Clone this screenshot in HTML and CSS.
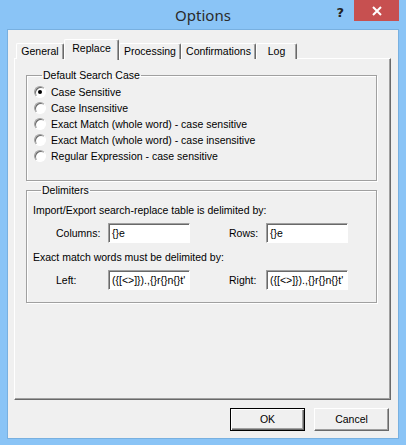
FILE: index.html
```html
<!DOCTYPE html>
<html lang="en">
<head>
    <meta charset="UTF-8">
    <title>Options</title>
    <link rel="stylesheet" href="styles.css">
</head>

<body>
    <div class="window">
        <div class="titlebar">
            <span></span>
            <span class="title">Options</span>
            <div class="caption-buttons">
                <span class="help">?</span>
                <span class="close">
                    <svg width="10" height="10" viewBox="0 0 10 10">
                        <path d="M1 1 L9 9 M9 1 L1 9" stroke="#fff" stroke-width="2"/>
                    </svg>
                </span>
            </div>
        </div>

        <div class="client">
            <div class="tabs">
                <div class="tab tab-general">General</div>
                <div class="tab tab-replace active">Replace</div>
                <div class="tab tab-processing">Processing</div>
                <div class="tab tab-confirm">Confirmations</div>
                <div class="tab tab-log">Log</div>
            </div>

            <div class="panel">
                <fieldset class="group group-case">
                    <legend>Default Search Case</legend>
                    <label class="radio"><span class="dot checked"></span>Case Sensitive</label>
                    <label class="radio"><span class="dot"></span>Case Insensitive</label>
                    <label class="radio"><span class="dot"></span>Exact Match (whole word) - case sensitive</label>
                    <label class="radio"><span class="dot"></span>Exact Match (whole word) - case insensitive</label>
                    <label class="radio"><span class="dot"></span>Regular Expression - case sensitive</label>
                </fieldset>

                <fieldset class="group group-delim">
                    <legend>Delimiters</legend>
                    <p class="note">Import/Export search-replace table is delimited by:</p>
                    <div class="field-row">
                        <span class="lbl">Columns:</span>
                        <span class="edit">{}e</span>
                        <span class="lbl lbl-2">Rows:</span>
                        <span class="edit">{}e</span>
                    </div>
                    <p class="note note-2">Exact match words must be delimited by:</p>
                    <div class="field-row">
                        <span class="lbl">Left:</span>
                        <span class="edit">({[&lt;&gt;]}).,{}r{}n{}t'</span>
                        <span class="lbl lbl-2">Right:</span>
                        <span class="edit">({[&lt;&gt;]}).,{}r{}n{}t'</span>
                    </div>
                </fieldset>
            </div>

            <div class="buttons">
                <div class="btn btn-default">OK</div>
                <div class="btn">Cancel</div>
            </div>
        </div>
    </div>
</body>
</html>
```

FILE: styles.css
```css
body {
    margin: 0;
    font-family: "Liberation Sans", Arial, sans-serif;
    font-size: 10.5px;
    color: #000;
}

.window {
    width: 406px;
    height: 445px;
    background-color: #8ac4f6;
    display: flex;
    flex-direction: column;
    box-sizing: border-box;
}

/* title bar */
.titlebar {
    height: 29px;
    display: grid;
    grid-template-columns: 1fr auto 1fr;
    align-items: start;
    flex-shrink: 0;
}

.title {
    font-family: "Noto Sans", sans-serif;
    font-size: 15px;
    line-height: 30px;
    color: #2b2b2b;
}

.caption-buttons {
    display: flex;
    justify-content: flex-end;
    align-items: flex-start;
    padding-right: 7px;
}

.help {
    font-family: "DejaVu Sans", sans-serif;
    font-weight: bold;
    font-size: 13px;
    line-height: 26px;
    color: #222;
    margin-right: 10px;
}

.close {
    width: 45px;
    height: 21px;
    background-color: #c75050;
    display: flex;
    justify-content: center;
    align-items: center;
}

/* client area */
.client {
    flex: 1;
    margin: 0 7px 6px 7px;
    border: 1px solid #78b0e0;
    background-color: #f0f0f0;
    display: flex;
    flex-direction: column;
}

.tabs {
    display: flex;
    align-items: flex-end;
    height: 20px;
    margin: 9px 0 0 8px;
    position: relative;
    z-index: 1;
}

.tab {
    height: 16px;
    box-sizing: border-box;
    border-top: 1px solid #fff;
    border-left: 1px solid #fff;
    border-right: 1px solid #696969;
    border-radius: 2px 2px 0 0;
    box-shadow: inset -1px 0 0 #a0a0a0;
    text-align: center;
    line-height: 15px;
    background-color: #f0f0f0;
}

.tab-general { width: 48px; }
.tab-replace { width: 55px; }
.tab-processing { width: 62px; }
.tab-confirm { width: 75px; }
.tab-log { width: 41px; }

.tab.active {
    height: 21px;
    line-height: 17px;
    margin-bottom: -1px;
}

.panel {
    margin: -1px 7px 0 6px;
    height: 342px;
    box-sizing: border-box;
    border-top: 1px solid #fff;
    border-left: 1px solid #fff;
    border-right: 1px solid #696969;
    border-bottom: 1px solid #696969;
    box-shadow: inset -1px -1px 0 #a0a0a0;
    padding: 10px 13px 0 11px;
}

.group {
    margin: 0;
    border: 1px solid #a0a0a0;
    box-shadow: 1px 1px 0 #fff, inset 1px 1px 0 #fff;
    padding: 0;
}

.group legend {
    padding: 0 1px;
    margin-left: 8px;
    line-height: 13px;
}

.group-case {
    height: 112px;
    box-sizing: border-box;
    padding: 2px 0 0 7px;
}

.radio {
    display: flex;
    align-items: center;
    height: 16px;
}

.dot {
    width: 12px;
    height: 12px;
    box-sizing: border-box;
    border-radius: 50%;
    border: 1px solid;
    border-color: #a0a0a0 #fff #fff #a0a0a0;
    box-shadow: inset 1px 1px 0 #696969;
    background-color: #fff;
    margin-right: 5px;
    display: flex;
    justify-content: center;
    align-items: center;
}

.dot.checked::after {
    content: "";
    width: 4px;
    height: 4px;
    border-radius: 50%;
    background-color: #000;
}

.group-delim {
    margin-top: 3px;
    height: 119px;
    box-sizing: border-box;
    padding: 2px 0 0 6px;
}

.note {
    margin: 3px 0 0 0;
    line-height: 16px;
}

.note-2 {
    margin-top: 6px;
}

.field-row {
    display: flex;
    align-items: center;
    margin-top: 5px;
    padding-left: 23px;
}

.lbl {
    width: 52px;
}

.lbl-2 {
    margin-left: 39px;
    width: 37px;
}

.edit {
    width: 82px;
    height: 20px;
    box-sizing: border-box;
    border: 1px solid;
    border-color: #a0a0a0 #fff #fff #a0a0a0;
    box-shadow: inset 1px 1px 0 #696969;
    background-color: #fff;
    padding: 2px 0 0 3px;
    line-height: 15px;
    white-space: nowrap;
    overflow: hidden;
}

.buttons {
    display: flex;
    justify-content: flex-end;
    gap: 9px;
    margin: 8px 9px 0 0;
}

.btn {
    width: 75px;
    height: 23px;
    box-sizing: border-box;
    border: 1px solid;
    border-color: #fff #696969 #696969 #fff;
    box-shadow: inset -1px -1px 0 #a0a0a0;
    text-align: center;
    line-height: 20px;
}

.btn-default {
    border-color: #000;
    box-shadow: inset 1px 1px 0 #fff, inset -1px -1px 0 #696969, inset -2px -2px 0 #a0a0a0;
}
```
